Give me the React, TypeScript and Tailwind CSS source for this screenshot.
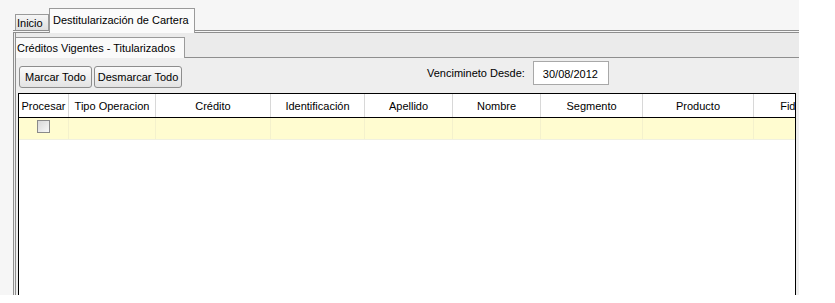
const columns = [
  { label: "Procesar", width: "w-[50px]" },
  { label: "Tipo Operacion", width: "w-[87px]" },
  { label: "Crédito", width: "w-[115px]" },
  { label: "Identificación", width: "w-[94px]" },
  { label: "Apellido", width: "w-[88px]" },
  { label: "Nombre", width: "w-[88px]" },
  { label: "Segmento", width: "w-[102px]" },
  { label: "Producto", width: "w-[111px]" },
  { label: "Fideicomiso", width: "w-[112px]" },
];

const Button = ({ label, width }: { label: string; width: string }) => (
  <button
    className={`${width} h-[22px] rounded-[3px] border border-[#8d8d8d] bg-gradient-to-b from-[#fbfbfb] to-[#e3e3e3] text-[11px] leading-none text-black`}
  >
    {label}
  </button>
);

export default function App() {
  return (
    <div className="w-[835px] h-[303px] bg-white font-['Liberation_Sans',Arial,sans-serif] text-[11px] text-black overflow-hidden">
      <div className="w-[799px] h-[295px] bg-[#f6f6f6] pl-[13px] flex flex-col overflow-hidden">
        {/* outer tabs */}
        <div className="h-[33px] shrink-0 flex items-end border-b-[3px] border-double border-[#8e8e8e]">
          <div className="ml-[2px] w-[34px] h-[16px] border border-b-0 border-[#9a9a9a] bg-gradient-to-b from-[#f6f6f6] to-[#dedede] pl-[1px] pt-[1px] leading-[14px] whitespace-nowrap">
            Inicio
          </div>
          <div className="relative z-10 -mb-[3px] w-[146px] h-[25px] border border-b-0 border-[#9a9a9a] bg-[#fbfbfb] pl-[3px] pt-[4px] leading-[14px] whitespace-nowrap">
            Destitularización de Cartera
          </div>
        </div>

        {/* outer panel */}
        <div className="flex-1 flex flex-col border-l-[3px] border-double border-[#8e8e8e] bg-[#eeeeee]">
          {/* inner tabs */}
          <div className="h-[25px] shrink-0 flex items-end border-b border-[#8e8e8e] bg-[#ebebeb]">
            <div className="relative z-10 -mb-px w-[169px] h-[21px] border-t border-r border-[#9a9a9a] bg-[#fafafa] pl-[1px] pt-[3px] leading-[14px] whitespace-nowrap">
              Créditos Vigentes - Titularizados
            </div>
          </div>

          {/* toolbar */}
          <div className="h-[35px] shrink-0 flex items-start pl-[3px]">
            <div className="mt-[8px] flex gap-[2px]">
              <Button label="Marcar Todo" width="w-[73px]" />
              <Button label="Desmarcar Todo" width="w-[88px]" />
            </div>
            <div className="ml-[245px] mt-[8px] leading-[14px] whitespace-nowrap">Vencimineto Desde:</div>
            <div className="ml-[8px] mt-[3px] w-[76px] h-[24px] border border-[#a8a8a8] bg-white pl-[9px] pt-[5px] leading-[14px]">
              30/08/2012
            </div>
          </div>

          {/* table */}
          <div className="flex-1 ml-[2px] mr-[3px] border border-black border-b-0 bg-white overflow-hidden">
            <div className="flex h-[24px] border-b border-black whitespace-nowrap">
              {columns.map((c) => (
                <div
                  key={c.label}
                  className={`${c.width} shrink-0 border-r border-[#d8d8d8] flex items-center justify-center leading-[14px]`}
                >
                  {c.label}
                </div>
              ))}
            </div>
            <div className="flex h-[22px] border-b border-[#f0f0e0] bg-[#fffcd0]">
              {columns.map((c, i) => (
                <div
                  key={c.label}
                  className={`${c.width} shrink-0 border-r border-[#f4f1cc] flex items-start justify-center`}
                >
                  {i === 0 && (
                    <div className="mt-[2px] w-[13px] h-[13px] border border-[#8a8a8a] bg-gradient-to-br from-[#d8d8d8] to-[#f8f8f8]" />
                  )}
                </div>
              ))}
            </div>
          </div>
        </div>
      </div>
    </div>
  );
}
